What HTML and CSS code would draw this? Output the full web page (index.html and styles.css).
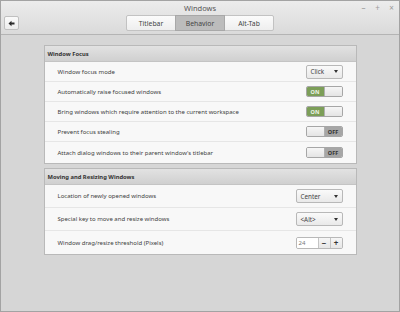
FILE: index.html
```html
<!DOCTYPE html>
<html>
<head>
<meta charset="utf-8">
<link rel="stylesheet" href="styles.css">
</head>
<body>
<div class="window">
  <div class="header">
    <div class="titlebar">
      <div></div>
      <div class="title">Windows</div>
      <div class="controls">
        <span class="ctl">&#8211;</span><span class="ctl">+</span><span class="ctl x">&#215;</span>
      </div>
    </div>
    <div class="toolbar">
      <div class="left">
        <div class="back">
          <svg width="7" height="7" viewBox="0 0 7 7"><path d="M0.5 3.5 L3.5 0.8 L3.5 2.4 L6.5 2.4 L6.5 4.6 L3.5 4.6 L3.5 6.2 Z" fill="#2a2a2a"/></svg>
        </div>
      </div>
      <div class="tabs">
        <div class="tab">Titlebar</div>
        <div class="tab active">Behavior</div>
        <div class="tab">Alt-Tab</div>
      </div>
      <div></div>
    </div>
  </div>
  <div class="content">
    <div class="section">
      <div class="sec-head">Window Focus</div>
      <div class="row r1"><span class="label">Window focus mode</span><div class="combo w36">Click<span class="arr"></span></div></div>
      <div class="row r1"><span class="label">Automatically raise focused windows</span><div class="switch on"><span class="a">ON</span><span class="b"></span></div></div>
      <div class="row r1"><span class="label">Bring windows which require attention to the current workspace</span><div class="switch on"><span class="a">ON</span><span class="b"></span></div></div>
      <div class="row r1"><span class="label">Prevent focus stealing</span><div class="switch off"><span class="a"></span><span class="b">OFF</span></div></div>
      <div class="row r1 last"><span class="label">Attach dialog windows to their parent window's titlebar</span><div class="switch off"><span class="a"></span><span class="b">OFF</span></div></div>
    </div>
    <div class="section">
      <div class="sec-head">Moving and Resizing Windows</div>
      <div class="row r2"><span class="label">Location of newly opened windows</span><div class="combo w46">Center<span class="arr"></span></div></div>
      <div class="row r2"><span class="label">Special key to move and resize windows</span><div class="combo w46">&lt;Alt&gt;<span class="arr"></span></div></div>
      <div class="row r2 last"><span class="label">Window drag/resize threshold (Pixels)</span>
        <div class="spin"><span class="entry">24</span><span class="sb">&#8722;</span><span class="sb">+</span></div>
      </div>
    </div>
  </div>
</div>
</body>
</html>
```
FILE: styles.css
```css
html, body {
  margin: 0;
  padding: 0;
}
body {
  font-family: "Noto Sans", "DejaVu Sans", sans-serif;
  font-size: 6px;
  color: #3a3a3a;
}
.window {
  width: 400px;
  height: 312px;
  box-sizing: border-box;
  border: 1px solid #a3a3a3;
  background: #d6d6d6;
  display: flex;
  flex-direction: column;
}
.header {
  height: 34px;
  box-sizing: border-box;
  background: linear-gradient(#ececec, #dadada);
  border-bottom: 1px solid #b4b4b4;
  display: flex;
  flex-direction: column;
}
.titlebar {
  height: 13px;
  display: grid;
  grid-template-columns: 1fr auto 1fr;
  align-items: center;
}
.title {
  font-size: 7.5px;
  color: #555;
  padding-top: 1px;
}
.controls {
  display: flex;
  justify-content: flex-end;
  gap: 7px;
  padding-right: 4px;
  color: #9a9a9a;
  font-size: 8px;
}
.ctl { width: 7px; text-align: center; line-height: 10px; }
.toolbar {
  margin-top: 1px;
  height: 16px;
  display: grid;
  grid-template-columns: 1fr auto 1fr;
  align-items: center;
}
.left { padding-left: 3px; }
.back {
  width: 15px;
  height: 14px;
  box-sizing: border-box;
  border: 1px solid #c0c0c0;
  border-radius: 2px;
  background: linear-gradient(#fafafa, #ececec);
  display: flex;
  align-items: center;
  justify-content: center;
}
.tabs {
  display: flex;
  height: 16px;
}
.tab {
  width: 50px;
  box-sizing: border-box;
  border: 1px solid #c2c2c2;
  margin-left: -1px;
  background: linear-gradient(#fbfbfb, #eeeeee);
  display: flex;
  align-items: center;
  justify-content: center;
  font-size: 6.8px;
  color: #444;
}
.tab:first-child { border-radius: 2px 0 0 2px; margin-left: 0; }
.tab:last-child { border-radius: 0 2px 2px 0; }
.tab.active {
  background: #bcbcbc;
  border-color: #a8a8a8;
  position: relative;
  z-index: 1;
}
.content {
  padding-top: 10px;
  display: flex;
  flex-direction: column;
  align-items: center;
  gap: 4px;
}
.section {
  width: 313px;
  box-sizing: border-box;
  border: 1px solid #b9b9b9;
  background: #f8f8f8;
}
.sec-head {
  height: 16px;
  box-sizing: border-box;
  background: linear-gradient(#e2e2e2, #d0d0d0);
  border-bottom: 1px solid #c4c4c4;
  font-weight: bold;
  font-size: 5.8px;
  color: #333;
  padding-left: 3px;
  display: flex;
  align-items: center;
}
.row {
  display: flex;
  align-items: center;
  justify-content: space-between;
  padding: 0 13px 0 13px;
  border-bottom: 1px solid #e6e6e6;
  box-sizing: border-box;
}
.row.last { border-bottom: none; }
.r1 { height: 20px; }
.r1.last { height: 21px; }
.r2 { height: 23px; }
.label { color: #404040; }
.combo {
  height: 14px;
  box-sizing: border-box;
  border: 1px solid #b8b8b8;
  border-radius: 2px;
  background: linear-gradient(#fafafa, #e9e9e9);
  display: flex;
  align-items: center;
  justify-content: space-between;
  padding: 0 4px 0 4px;
  color: #444;
  font-size: 6.3px;
}
.w36 { width: 37px; }
.w46 { width: 47px; }
.arr {
  width: 0;
  height: 0;
  border-left: 2.5px solid transparent;
  border-right: 2.5px solid transparent;
  border-top: 3px solid #333;
}
.switch {
  width: 37px;
  height: 11px;
  box-sizing: border-box;
  border: 1px solid #a6a6a6;
  border-radius: 2px;
  display: flex;
  overflow: hidden;
  font-size: 5.5px;
  font-weight: bold;
}
.switch span {
  flex: 1;
  display: flex;
  align-items: center;
  justify-content: center;
}
.switch.on .a { background: #7c9e58; color: #eef4e6; }
.switch.on .b { background: linear-gradient(#f6f6f6, #e4e4e4); border-left: 1px solid #b0b0b0; }
.switch.off .a { background: linear-gradient(#f6f6f6, #e4e4e4); border-right: 1px solid #b0b0b0; }
.switch.off .b { background: #a6a6a6; color: #333; }
.spin {
  width: 47px;
  height: 12px;
  box-sizing: border-box;
  border: 1px solid #b8b8b8;
  border-radius: 2px;
  display: flex;
  overflow: hidden;
}
.entry {
  width: 21px;
  background: #fff;
  color: #777;
  font-size: 6px;
  display: flex;
  align-items: center;
  padding-left: 2px;
  box-sizing: border-box;
}
.sb {
  flex: 1;
  border-left: 1px solid #c4c4c4;
  background: linear-gradient(#f6f6f6, #e6e6e6);
  display: flex;
  align-items: center;
  justify-content: center;
  font-weight: bold;
  font-size: 8px;
  color: #333;
}
```
